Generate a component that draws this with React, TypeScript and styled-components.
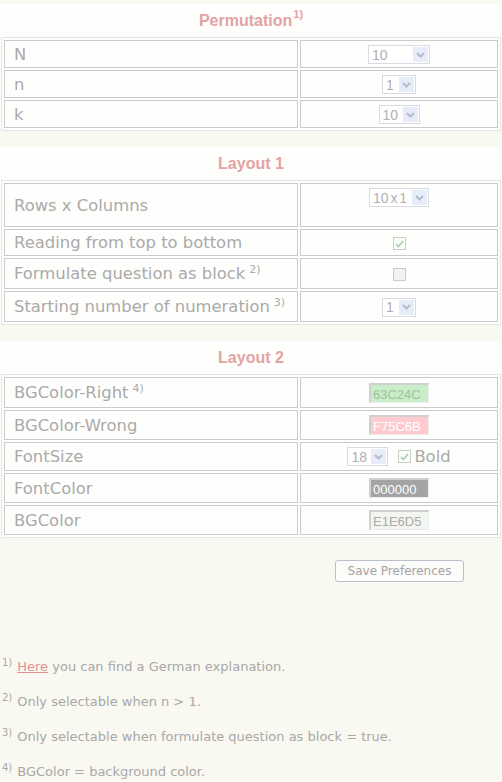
import React from "react";
import styled, { createGlobalStyle } from "styled-components";

const GlobalStyle = createGlobalStyle`
    body {
        margin: 0;
        background: #f9f9f2;
        font-family: "DejaVu Sans", Verdana, sans-serif;
        color: #a8a8a8;
    }
`

const Page = styled.div`
    width: 502px;
    padding-top: 4px;
`

const Section = styled.section`
    background: #fefefc;
    margin-bottom: 16px;
`

const SectionTitle = styled.h2`
    margin: 0;
    height: 33px;
    display: flex;
    align-items: center;
    justify-content: center;
    font-family: "Liberation Sans", Arial, sans-serif;
    font-size: 16px;
    font-weight: bold;
    color: #e3a3a3;
    sup {
        font-size: 11px;
        line-height: 0;
        margin-left: 1px;
        position: relative;
        top: -7px;
    }
`

const Table = styled.table`
    width: 500px;
    margin-left: 1px;
    border: 1px solid #e4e4e4;
    border-spacing: 2px;
    background: #fefefc;
`

const Row = styled.tr<{ $h: number }>`
    height: ${({ $h }) => $h}px;
`

const LabelCell = styled.td`
    width: 283px;
    border: 1px solid #cacaca;
    padding: 0 0 0 9px;
    font-size: 16.4px;
    color: #aaaaaa;
    vertical-align: middle;
    white-space: nowrap;
    sup {
        font-size: 11px;
        line-height: 0;
        vertical-align: 0;
        position: relative;
        top: -6px;
        margin-left: 4px;
    }
`

const ValueCell = styled.td<{ $top?: boolean }>`
    border: 1px solid #cacaca;
    padding: ${({ $top }) => ($top ? "3px 0 0" : "0")};
    text-align: center;
    vertical-align: ${({ $top }) => ($top ? "top" : "middle")};
`

const SelectBox = styled.span<{ $w: number }>`
    display: inline-flex;
    align-items: center;
    justify-content: space-between;
    box-sizing: border-box;
    width: ${({ $w }) => $w}px;
    height: 19px;
    padding: 1px 1px 1px 3px;
    border: 1px solid #d8dce2;
    background: #fff;
    font-family: "Liberation Sans", Arial, sans-serif;
    font-size: 14px;
    color: #b0b0b0;
    white-space: nowrap;
    word-spacing: -2px;
    vertical-align: middle;
`

const SelectArrow = styled.span`
    display: flex;
    align-items: center;
    justify-content: center;
    flex-shrink: 0;
    width: 15px;
    height: 15px;
    background: #e6ecf8;
`

const ColorInput = styled.span<{ $bg: string; $fg: string }>`
    display: inline-block;
    box-sizing: border-box;
    width: 60px;
    height: 20px;
    padding: 2px 0 0 2px;
    border-top: 2px solid #d0d0d0;
    border-left: 2px solid #d0d0d0;
    border-right: 1px solid #eeeeee;
    border-bottom: 1px solid #eeeeee;
    background: ${({ $bg }) => $bg};
    color: ${({ $fg }) => $fg};
    font-family: "Liberation Sans", Arial, sans-serif;
    font-size: 13px;
    line-height: 15px;
    text-align: left;
    vertical-align: middle;
`

const Check = styled.span<{ $checked?: boolean }>`
    display: inline-flex;
    align-items: center;
    justify-content: center;
    box-sizing: border-box;
    width: 13px;
    height: 13px;
    border: 1px solid ${({ $checked }) => ($checked ? "#c4d0c4" : "#cccccc")};
    background: ${({ $checked }) => ($checked ? "#fbfdfb" : "#f2f2f2")};
    vertical-align: middle;
`

const FontRow = styled.div`
    display: flex;
    align-items: center;
    justify-content: center;
    gap: 10px;
`

const BoldLabel = styled.label`
    display: inline-flex;
    align-items: center;
    gap: 3px;
    font-size: 16.4px;
    color: #aaaaaa;
`

const ButtonRow = styled.div`
    display: grid;
    grid-template-columns: 300px 199px;
    margin-top: 22px;
`

const SaveButton = styled.button`
    grid-column: 2;
    justify-self: center;
    width: 129px;
    height: 22px;
    padding: 0;
    border: 1px solid #b8c0cc;
    border-radius: 3px;
    background: #fcfcfa;
    font-family: "DejaVu Sans", Verdana, sans-serif;
    font-size: 12px;
    color: #a4a4a4;
`

const Footnotes = styled.div`
    margin-top: 77px;
    padding-left: 2px;
`

const Note = styled.p`
    margin: 0 0 20px;
    font-size: 13px;
    line-height: 15px;
    color: #a8a8a8;
    sup {
        font-size: 10px;
        line-height: 0;
        margin-right: 5px;
    }
    a {
        color: #e29090;
    }
`

const Chevron = () => (
    <svg width="9" height="6" viewBox="0 0 9 6">
        <path d="M1 1 L4.5 4.5 L8 1" fill="none" stroke="#b4bccb" strokeWidth="2" />
    </svg>
)

const Tick = () => (
    <svg width="9" height="8" viewBox="0 0 9 8">
        <path d="M1 4 L3.5 6.5 L8 1" fill="none" stroke="#a6d0a6" strokeWidth="1.6" />
    </svg>
)

const Select: React.FC<{ value: string; width: number }> = ({ value, width }) => (
    <SelectBox $w={width}>
        <span>{value}</span>
        <SelectArrow><Chevron /></SelectArrow>
    </SelectBox>
)

const permutationRows = [
    { label: "N", value: "10", width: 62 },
    { label: "n", value: "1", width: 34 },
    { label: "k", value: "10", width: 41 },
]

const colorRows = [
    { label: "BGColor-Right", note: "4)", bg: "#c9edc9", fg: "#9cc49c", value: "63C24C", h: 31 },
    { label: "BGColor-Wrong", bg: "#ffcbd0", fg: "#ffffff", value: "F75C6B", h: 30 },
]

const App: React.FC = () => {
    return (
        <>
            <GlobalStyle />
            <Page>
                <Section>
                    <SectionTitle>Permutation<sup>1)</sup></SectionTitle>
                    <Table>
                        <tbody>
                            {permutationRows.map(({ label, value, width }) => (
                                <Row $h={28} key={label}>
                                    <LabelCell>{label}</LabelCell>
                                    <ValueCell><Select value={value} width={width} /></ValueCell>
                                </Row>
                            ))}
                        </tbody>
                    </Table>
                </Section>
                <Section>
                    <SectionTitle>Layout 1</SectionTitle>
                    <Table>
                        <tbody>
                            <Row $h={44}>
                                <LabelCell>Rows x Columns</LabelCell>
                                <ValueCell $top><Select value="10 x 1" width={60} /></ValueCell>
                            </Row>
                            <Row $h={27}>
                                <LabelCell>Reading from top to bottom</LabelCell>
                                <ValueCell><Check $checked><Tick /></Check></ValueCell>
                            </Row>
                            <Row $h={31}>
                                <LabelCell>Formulate question as block<sup>2)</sup></LabelCell>
                                <ValueCell><Check /></ValueCell>
                            </Row>
                            <Row $h={31}>
                                <LabelCell>Starting number of numeration<sup>3)</sup></LabelCell>
                                <ValueCell><Select value="1" width={34} /></ValueCell>
                            </Row>
                        </tbody>
                    </Table>
                </Section>
                <Section>
                    <SectionTitle>Layout 2</SectionTitle>
                    <Table>
                        <tbody>
                            {colorRows.map(({ label, note, bg, fg, value, h }) => (
                                <Row $h={h} key={label}>
                                    <LabelCell>{label}{note && <sup>{note}</sup>}</LabelCell>
                                    <ValueCell><ColorInput $bg={bg} $fg={fg}>{value}</ColorInput></ValueCell>
                                </Row>
                            ))}
                            <Row $h={29}>
                                <LabelCell>FontSize</LabelCell>
                                <ValueCell>
                                    <FontRow>
                                        <Select value="18" width={41} />
                                        <BoldLabel><Check $checked><Tick /></Check>Bold</BoldLabel>
                                    </FontRow>
                                </ValueCell>
                            </Row>
                            <Row $h={30}>
                                <LabelCell>FontColor</LabelCell>
                                <ValueCell><ColorInput $bg="#a4a4a4" $fg="#ffffff">000000</ColorInput></ValueCell>
                            </Row>
                            <Row $h={30}>
                                <LabelCell>BGColor</LabelCell>
                                <ValueCell><ColorInput $bg="#f3f5ef" $fg="#aaaaaa">E1E6D5</ColorInput></ValueCell>
                            </Row>
                        </tbody>
                    </Table>
                </Section>
                <ButtonRow>
                    <SaveButton>Save Preferences</SaveButton>
                </ButtonRow>
                <Footnotes>
                    <Note><sup>1)</sup><a href="#">Here</a> you can find a German explanation.</Note>
                    <Note><sup>2)</sup>Only selectable when n &gt; 1.</Note>
                    <Note><sup>3)</sup>Only selectable when formulate question as block = true.</Note>
                    <Note><sup>4)</sup>BGColor = background color.</Note>
                </Footnotes>
            </Page>
        </>
    );
}

export default App;
